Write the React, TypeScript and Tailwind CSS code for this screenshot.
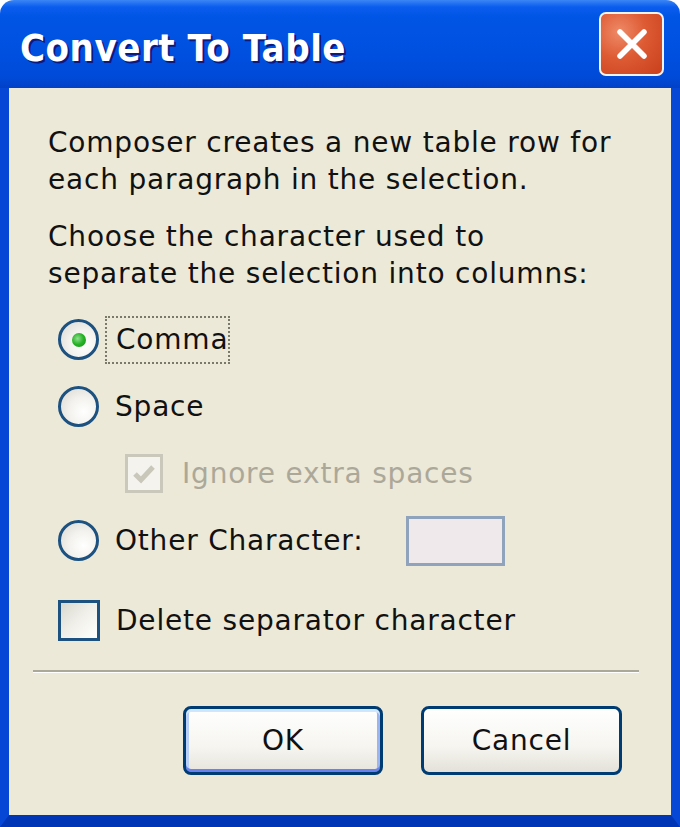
import React from "react";

const body = { fontFamily: '"DejaVu Sans", sans-serif' };

function Radio({ checked }: { checked?: boolean }) {
  return (
    <div className="relative flex h-[41px] w-[41px] shrink-0 items-center justify-center rounded-full border-[3px] border-[#1C5180] bg-[radial-gradient(circle_at_65%_65%,#ffffff_0%,#f3f2ee_45%,#d8d7d0_100%)]">
      {checked && (
        <div className="h-[14px] w-[14px] rounded-full bg-[radial-gradient(circle_at_40%_40%,#8ee08e_0%,#24b224_50%,#1a8f1a_100%)]" />
      )}
    </div>
  );
}

function CheckBox({ checked, disabled }: { checked?: boolean; disabled?: boolean }) {
  return (
    <div
      className={
        disabled
          ? "flex h-[39px] w-[38px] shrink-0 items-center justify-center border-[3px] border-[#CAC8BB] bg-[#F4F3EE]"
          : "flex h-[41px] w-[42px] shrink-0 items-center justify-center border-[3px] border-[#1C5180] bg-[linear-gradient(135deg,#d9d8d0_0%,#f1f0ea_50%,#ffffff_100%)]"
      }
    >
      {checked && (
        <svg width="24" height="22" viewBox="0 0 24 22">
          <path d="M3 11 L9 17 L21 4" fill="none" stroke={disabled ? "#C9C7BA" : "#21A121"} strokeWidth="5" />
        </svg>
      )}
    </div>
  );
}

export default function App() {
  return (
    <div className="flex h-[827px] w-[680px] flex-col bg-white" style={body}>
      {/* Title bar */}
      <div className="flex h-[88px] shrink-0 items-center justify-between rounded-t-[14px] bg-[linear-gradient(to_bottom,#3b86f5_0%,#0a5ced_8%,#0055e5_20%,#0050e0_60%,#004ad8_88%,#0240c6_100%)] pl-[20px] pr-[16px]">
        <div
          className="pt-[8px] text-[38px] font-bold leading-none tracking-[0.5px] text-white [text-shadow:2px_2px_0_#0a1a80]"
          style={{ fontFamily: '"DejaVu Sans Condensed", "DejaVu Sans", sans-serif' }}
        >
          Convert To Table
        </div>
        <div className="flex h-[64px] w-[65px] items-center justify-center rounded-[7px] border-[2px] border-[#f3f3f3] bg-[radial-gradient(circle_at_30%_30%,#ef8a68_0%,#dd5a33_45%,#c8401c_100%)]">
          <svg width="40" height="40" viewBox="0 0 40 40">
            <path d="M8 8 L32 32 M32 8 L8 32" stroke="#ffffff" strokeWidth="5.5" strokeLinecap="round" />
          </svg>
        </div>
      </div>

      {/* Frame */}
      <div className="flex flex-1 flex-col border-x-[9px] border-b-[12px] border-x-[#0747d6] border-b-[#0036b5] bg-[#ECE9D8]">
        <div className="flex flex-1 flex-col pt-[36px] text-[28px] leading-[37px] tracking-[0.8px] text-[#111]">
          <div className="pl-[39px]">
            <p>Composer creates a new table row for</p>
            <p>each paragraph in the selection.</p>
            <p className="mt-[20px]">Choose the character used to</p>
            <p>separate the selection into columns:</p>
          </div>

          <div className="mt-[14px] flex flex-col pl-[49px]">
            <div className="flex h-[67px] items-center">
              <Radio checked />
              <span className="ml-[6px] border-[2px] border-dotted border-[#7a7a6a] pl-[9px] pr-0 leading-[44px]">Comma</span>
            </div>
            <div className="flex h-[67px] items-center">
              <Radio />
              <span className="ml-[16px]">Space</span>
            </div>
            <div className="flex h-[67px] items-center pl-[67px]">
              <CheckBox checked disabled />
              <span className="ml-[19px] text-[#ACA899]">Ignore extra spaces</span>
            </div>
            <div className="flex h-[67px] items-center">
              <Radio />
              <span className="ml-[16px] w-[291px] shrink-0">Other Character:</span>
              <div className="h-[50px] w-[99px] border-[3px] border-[#8fa3bd] bg-[#EFE9EC]" />
            </div>
            <div className="mt-[13px] flex h-[67px] items-center">
              <CheckBox />
              <span className="ml-[16px]">Delete separator character</span>
            </div>
          </div>

          <div className="ml-[24px] mr-[32px] mt-[16px] h-[3px] border-t-[2px] border-b-[1px] border-t-[#ACA899] border-b-white" />

          <div className="mt-[33px] flex justify-end gap-[38px] pr-[49px]">
            <button className="h-[69px] w-[200px] rounded-[8px] border-[3px] border-[#003C74] bg-[linear-gradient(to_bottom,#ffffff_0%,#f6f5f0_60%,#e6e4dc_100%)] shadow-[inset_0_3px_0_#cee7ff,inset_0_-3px_0_#6982ee,inset_3px_0_0_#b8d0f8,inset_-3px_0_0_#9db4f0] text-[28px] tracking-[0.8px] text-[#111]">
              OK
            </button>
            <button className="h-[69px] w-[201px] rounded-[8px] border-[3px] border-[#003C74] bg-[linear-gradient(to_bottom,#ffffff_0%,#f6f5f0_60%,#e3e1d8_100%)] text-[28px] tracking-[0.8px] text-[#111]">
              Cancel
            </button>
          </div>
        </div>
      </div>
    </div>
  );
}
